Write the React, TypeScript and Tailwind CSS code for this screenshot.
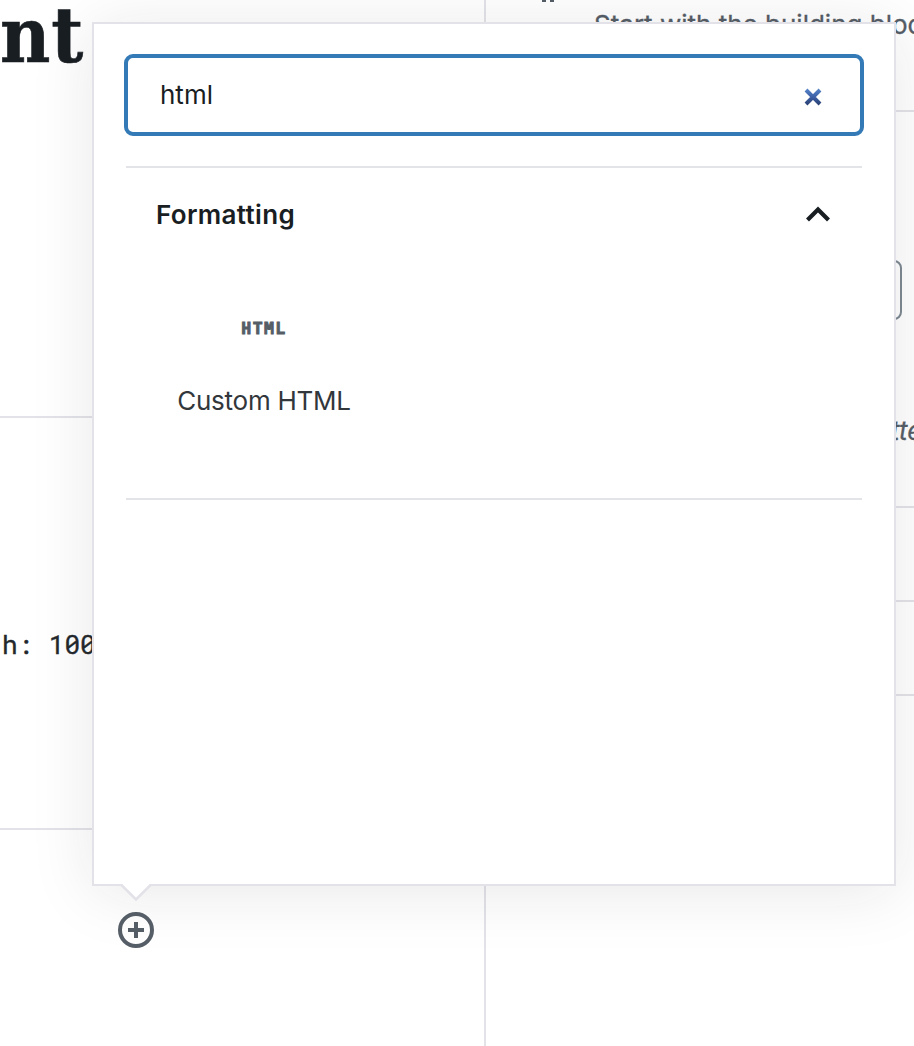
import React, { useState } from "react";

function BlockIcon() {
  return (
    <svg className="block h-[36px] w-[32px]" viewBox="0 0 32 36" fill="#555d66">
      <path d="M13 2h17v4h-2v30h-4V6h-4v30h-4V20h-3a9 9 0 0 1 0-18z" />
    </svg>
  );
}

function Editor() {
  return (
    <main className="flex h-full w-[486px] shrink-0 flex-col overflow-hidden border-r-2 border-[#e2e2e8] bg-white">
      <div className="h-[418px] shrink-0 border-b-2 border-[#e2e2e8]">
        <h1 className="-mt-[11px] font-['DejaVu_Serif_Condensed','DejaVu_Serif',serif] text-[77px] leading-[92px] font-bold tracking-[0.8px] text-[#191e23] [-webkit-text-stroke:0.6px_#191e23]">
          nt
        </h1>
      </div>
      <div className="flex h-[412px] shrink-0 items-start border-b-2 border-[#e2e2e8]">
        <pre className="mt-[208px] ml-[2px] font-['Roboto_Mono','DejaVu_Sans_Mono',monospace] text-[26px] leading-[36px] text-[#23282d] [-webkit-text-stroke:0.4px_#23282d]">
          h: 100%
        </pre>
      </div>
    </main>
  );
}

function Sidebar() {
  return (
    <aside className="flex h-full w-[428px] shrink-0 flex-col overflow-hidden bg-white text-[26px] text-[#555d66]">
      <div className="flex h-[112px] shrink-0 items-start border-b-2 border-[#e2e2e8] pl-[40px]">
        <div className="-mt-[34px] w-[68px] shrink-0">
          <BlockIcon />
        </div>
        <p className="mt-[7px] leading-[36px] whitespace-nowrap [-webkit-text-stroke:0.3px_#555d66]">
          Start with the building blocks
        </p>
      </div>
      <div className="flex h-[396px] shrink-0 flex-col border-b-2 border-[#e2e2e8]">
        <div className="mt-[148px] ml-[296px] h-[60px] w-[120px] rounded-[8px] border-2 border-[#7e8993] bg-white" />
        <p className="mt-[93px] ml-[405px] leading-[36px] whitespace-nowrap italic [-webkit-text-stroke:0.3px_#555d66]">
          tter
        </p>
      </div>
      <div className="h-[94px] shrink-0 border-b-2 border-[#e2e2e8]" />
      <div className="h-[94px] shrink-0 border-b-2 border-[#e2e2e8]" />
    </aside>
  );
}

function ClearIcon() {
  return (
    <svg className="block size-[20px]" viewBox="0 0 20 20" fill="none">
      <defs>
        <linearGradient id="clear" gradientUnits="userSpaceOnUse" x1="0" y1="2" x2="0" y2="18">
          <stop offset="0" stopColor="#5583c8" />
          <stop offset="0.5" stopColor="#3d5fa6" />
          <stop offset="1" stopColor="#283f70" />
        </linearGradient>
      </defs>
      <path d="M3 3l14 14M17 3L3 17" stroke="url(#clear)" strokeWidth="4" />
    </svg>
  );
}

function Inserter() {
  const [query, setQuery] = useState("html");
  const [open, setOpen] = useState(true);
  return (
    <section className="absolute top-[22px] left-[92px] flex h-[864px] w-[804px] flex-col border-2 border-[#e2e2e8] bg-white px-[30px] pt-[30px] shadow-[0_6px_60px_rgba(25,30,35,0.1)]">
      <div className="flex h-[82px] shrink-0 items-center rounded-[9px] border-4 border-[#337ab7] pr-[37px] pl-[32px]">
        <input
          className="mb-[2px] h-[40px] min-w-0 flex-1 bg-transparent text-[26px] text-[#191e23] outline-none"
          value={query}
          onChange={(e) => setQuery(e.target.value)}
        />
        <button className="mt-[4px]" aria-label="Clear" onClick={() => setQuery("")}>
          <ClearIcon />
        </button>
      </div>
      <div className="mx-[2px] mt-[30px] flex h-[334px] shrink-0 flex-col border-y-2 border-[#e2e4e7]">
        <button
          className="flex h-[94px] items-center justify-between pr-[32px] pb-[2px] pl-[30px] text-[26px] font-semibold tracking-[0.33px] text-[#191e23]"
          onClick={() => setOpen(!open)}
        >
          <span>Formatting</span>
          <svg className="block h-[16px] w-[24px]" viewBox="0 0 24 16" fill="none">
            <path d="M1.5 14L12 3.5L22.5 14" stroke="#191e23" strokeWidth="4.2" />
          </svg>
        </button>
        {open && (
          <div className="ml-[30px] flex w-[216px] flex-col items-center pt-[51px]">
            <span className="font-['DejaVu_Sans_Mono',monospace] text-[16.5px] leading-[32px] font-bold tracking-[1.4px] text-[#555d66] [-webkit-text-stroke:0.9px_#555d66]">
              HTML
            </span>
            <span className="mt-[38px] text-[26px] leading-[36px] tracking-[-0.25px] whitespace-nowrap text-[#32373c]">
              Custom HTML
            </span>
          </div>
        )}
      </div>
      <svg className="absolute top-[858px] left-[26px] h-[20px] w-[32px]" viewBox="0 0 32 20">
        <path d="M0 2L2 2L16 16L30 2L32 2V0H0z" fill="#fff" />
        <path d="M1 2.6L16 17.4L31 2.6" fill="none" stroke="#e2e2e8" strokeWidth="2.6" />
      </svg>
    </section>
  );
}

export default function App() {
  return (
    <div className="relative flex h-[1046px] w-[914px] overflow-hidden bg-white font-['Inter','Liberation_Sans',sans-serif]">
      <Editor />
      <Sidebar />
      <Inserter />
      <button className="absolute top-[912px] left-[118px]" aria-label="Add block">
        <svg className="block size-[36px]" viewBox="0 0 36 36" fill="none" stroke="#555d66" strokeWidth="4">
          <circle cx="18" cy="18" r="16" />
          <path d="M18 10v16M10 18h16" />
        </svg>
      </button>
    </div>
  );
}
